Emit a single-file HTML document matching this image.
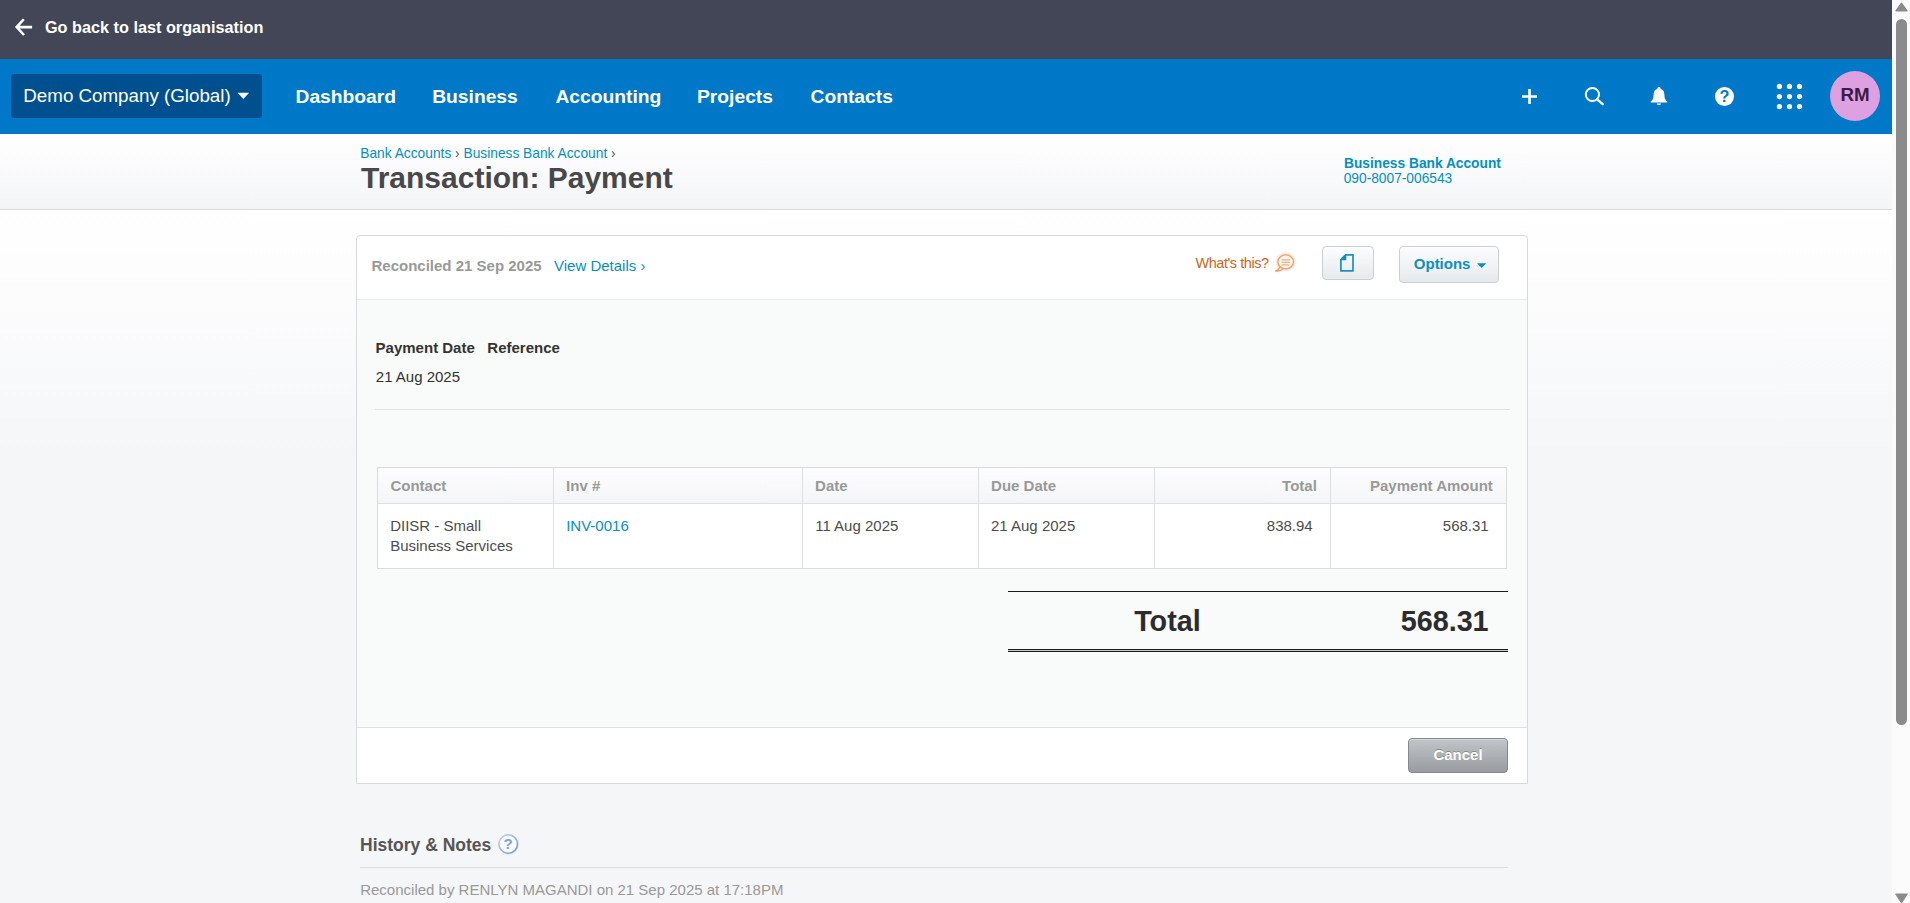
<!DOCTYPE html>
<html>
<head>
<meta charset="utf-8">
<title>Transaction: Payment</title>
<style>
*{box-sizing:border-box;margin:0;padding:0}
html,body{width:1910px;height:903px;overflow:hidden}
body{font-family:"Liberation Sans",sans-serif;font-size:15px;color:#333;background:#f5f6f8;position:relative}
.abs{position:absolute}
.t{position:absolute;white-space:nowrap;line-height:20px}
a{color:#048fc2;text-decoration:none}
/* page chrome */
#bgfade{left:0;top:210px;width:1892px;height:250px;background:linear-gradient(#fff,#f5f6f8)}
#topbar{left:0;top:0;width:1892px;height:59px;background:#424657}
#nav{left:0;top:59px;width:1892px;height:75px;background:#0078c8}
#hdr{left:0;top:134px;width:1892px;height:75px;background:linear-gradient(#fff,#f4f5f7)}
#hdrline{left:0;top:209px;width:1892px;height:1px;background:#d9dbde}
#org{left:11px;top:74px;width:251px;height:44px;border-radius:3px;background:#00508f}
.nv{font-weight:bold;font-size:19.25px;color:#fff}
/* scrollbar */
#sb{left:1892px;top:0;width:18px;height:903px;background:#fbfbfb}
#sbthumb{left:1896px;top:19px;width:11px;height:705.6px;border-radius:5.5px;background:#8b8b8b}
/* panel */
#panel{left:356px;top:235px;width:1172px;height:549px;border:1px solid #d9dadc;border-radius:4px 4px 0 0;background:#fff}
#pmid{left:357px;top:299px;width:1170px;height:429px;background:#f9fafa;border-top:1px solid #e8ebed;border-bottom:1px solid #dfe1e3}
.btn{border:1px solid #cbd0d4;border-radius:4px;background:linear-gradient(#fdfdfe,#e6e9ec)}
.th{font-weight:bold;color:#999}
.cell{color:#4c4c4e}
</style>
</head>
<body>
<div class="abs" id="bgfade"></div>
<div class="abs" id="topbar"></div>
<div class="abs" id="nav"></div>
<div class="abs" id="hdr"></div>
<div class="abs" id="hdrline"></div>

<!-- top dark bar -->
<svg class="abs" style="left:14px;top:18px" width="20" height="18" viewBox="0 0 20 18"><path d="M9.8 1.25 L2.65 9.1 L10 17 M3 9.1 H18.1" fill="none" stroke="#fff" stroke-width="2.55" stroke-linecap="butt" stroke-linejoin="miter"/></svg>
<div class="t" style="left:44.9px;top:17.4px;font-weight:bold;font-size:16.25px;color:#fff">Go back to last organisation</div>

<!-- nav -->
<div class="abs" id="org"></div>
<div class="t" style="left:23.3px;top:85.5px;font-size:18.75px;color:#fff">Demo Company (Global)</div>
<svg class="abs" style="left:237px;top:92px" width="13" height="8" viewBox="0 0 13 8"><path d="M0.7 0.8 H12.1 L6.4 7 Z" fill="#fff"/></svg>
<div class="t nv" style="left:295.5px;top:87.3px">Dashboard</div>
<div class="t nv" style="left:432.2px;top:87.3px">Business</div>
<div class="t nv" style="left:555.4px;top:87.3px">Accounting</div>
<div class="t nv" style="left:697px;top:87.3px">Projects</div>
<div class="t nv" style="left:810.5px;top:87.3px">Contacts</div>

<!-- nav icons -->
<svg class="abs" style="left:1520px;top:87px" width="20" height="20" viewBox="0 0 20 20"><path d="M9.5 2 V17 M2 9.5 H17" stroke="#fff" stroke-width="2.6" fill="none"/></svg>
<svg class="abs" style="left:1582px;top:84px" width="24" height="24" viewBox="0 0 24 24"><circle cx="10.4" cy="10.5" r="6.6" fill="none" stroke="#fff" stroke-width="2"/><path d="M15.2 15.3 L20.7 20.1" stroke="#fff" stroke-width="2.4" stroke-linecap="round"/></svg>
<svg class="abs" style="left:1649px;top:85px" width="20" height="22" viewBox="0 0 20 22"><path d="M10 2 C8.9 2 8.3 2.8 8.4 3.7 C5.6 4.6 4.6 7 4.6 10 C4.6 13.5 3.6 15 1.8 16.6 V17.6 H18.2 V16.6 C16.4 15 15.4 13.5 15.4 10 C15.4 7 14.4 4.6 11.6 3.7 C11.7 2.8 11.1 2 10 2 Z" fill="#fff"/><path d="M7.9 18.6 H12.1 C12.1 19.6 11.2 20.3 10 20.3 C8.8 20.3 7.9 19.6 7.9 18.6 Z" fill="#fff"/></svg>
<div class="abs" style="left:1715px;top:86.8px;width:18.8px;height:18.8px;border-radius:50%;background:#fff"></div>
<div class="t" style="left:1715px;top:86.1px;width:18.8px;text-align:center;font-weight:bold;font-size:16.25px;color:#0078c8">?</div>
<svg class="abs" style="left:1775px;top:82px" width="30" height="30" viewBox="0 0 30 30" fill="#fff"><circle cx="4.4" cy="4.4" r="2.6"/><circle cx="14.5" cy="4.4" r="2.6"/><circle cx="24.5" cy="4.4" r="2.6"/><circle cx="4.4" cy="14.6" r="2.6"/><circle cx="14.5" cy="14.6" r="2.6"/><circle cx="24.5" cy="14.6" r="2.6"/><circle cx="4.4" cy="24.6" r="2.6"/><circle cx="14.5" cy="24.6" r="2.6"/><circle cx="24.5" cy="24.6" r="2.6"/></svg>
<div class="abs" style="left:1830px;top:71px;width:50px;height:50px;border-radius:50%;background:#dda0e0"></div>
<div class="t" style="left:1830px;top:85.3px;width:50px;text-align:center;font-weight:bold;font-size:18.75px;color:#3f1946">RM</div>

<!-- page header -->
<div class="t" style="left:360.3px;top:144px;font-size:13.75px;color:#555"><a>Bank Accounts</a> › <a>Business Bank Account</a> ›</div>
<div class="t" style="left:361px;top:157.6px;font-weight:bold;font-size:30px;line-height:40px;color:#48484a">Transaction: Payment</div>
<div class="t" style="left:1344px;top:153.7px;font-weight:bold;font-size:13.75px;color:#048fc2">Business Bank Account</div>
<div class="t" style="left:1343.7px;top:168.9px;font-size:13.75px;color:#048fc2">090-8007-006543</div>

<!-- panel -->
<div class="abs" id="panel"></div>
<div class="abs" id="pmid"></div>
<div class="t" style="left:371.5px;top:255.7px;font-weight:bold;color:#999">Reconciled 21 Sep 2025</div>
<div class="t" style="left:554px;top:255.7px"><a>View Details ›</a></div>
<div class="t" style="left:1195.5px;top:252.9px;font-size:14.5px;letter-spacing:-0.45px;color:#d0641a">What's this?</div>
<svg class="abs" style="left:1273px;top:251px" width="24" height="23" viewBox="0 0 24 23"><defs><filter id="bg" x="-30%" y="-30%" width="160%" height="160%"><feGaussianBlur stdDeviation="0.9"/></filter></defs><g filter="url(#bg)" opacity=".55"><ellipse cx="12.7" cy="10.8" rx="7.9" ry="7.1" fill="none" stroke="#e89a5c" stroke-width="2.2"/><path d="M7 15.6 C6.4 17.6 5 19.2 2.6 20 C6 20.4 8.6 19.4 10.4 17.6 Z" fill="#e89a5c"/></g><path d="M7 15.4 C6.4 17.6 5 19.2 2.6 20 C6 20.4 8.6 19.4 10.6 17.4 Z" fill="#fbeadb" stroke="#e8a06a" stroke-width="1.3" stroke-linejoin="round"/><ellipse cx="12.7" cy="10.8" rx="7.75" ry="6.95" fill="#fdf5ec" stroke="#e9a572" stroke-width="1.35"/><path d="M8.6 8.8 H17.1 M8.6 11.3 H17.1 M8.6 13.8 H16" stroke="#ebb185" stroke-width="1.25"/></svg>
<div class="abs btn" style="left:1322px;top:246px;width:52px;height:34px"></div>
<svg class="abs" style="left:1338px;top:252px" width="18" height="22" viewBox="0 0 18 22"><path d="M7.6 2.9 H15 V18.8 H2.9 V7.6 Z" fill="none" stroke="#1b90c6" stroke-width="1.7" stroke-linejoin="miter"/><path d="M8.3 2.2 V8.2 H2.3 Z" fill="#0f8cc4"/></svg>
<div class="abs btn" style="left:1399px;top:246px;width:100px;height:37px"></div>
<div class="t" style="left:1413.8px;top:254px;font-weight:bold;color:#0d8fc5">Options</div>
<svg class="abs" style="left:1476px;top:262px" width="12" height="7" viewBox="0 0 12 7"><path d="M1 1.2 H10.4 L5.7 6 Z" fill="#0d8fc5"/></svg>

<div class="t" style="left:375.6px;top:337.7px;font-weight:bold;color:#333">Payment Date</div>
<div class="t" style="left:487.3px;top:337.7px;font-weight:bold;color:#333">Reference</div>
<div class="t" style="left:375.8px;top:367.4px;color:#333">21 Aug 2025</div>
<div class="abs" style="left:375px;top:409px;width:1135px;height:1px;background:#dfe0e0"></div>
<div class="abs" style="left:375px;top:410px;width:1135px;height:1px;background:#fdfefe"></div>

<!-- table -->
<div class="abs" style="left:377px;top:467px;width:1130px;height:102px;background:#fff;border:1px solid #d9dbdd"></div>
<div class="abs" style="left:378px;top:468px;width:1128px;height:35px;background:linear-gradient(#fdfdfe,#f4f5f7)"></div>
<div class="abs" style="left:378px;top:503px;width:1128px;height:1px;background:#dddfe1"></div>
<div class="abs" style="left:553px;top:468px;width:1px;height:100px;background:#dddfe1"></div>
<div class="abs" style="left:802px;top:468px;width:1px;height:100px;background:#dddfe1"></div>
<div class="abs" style="left:978px;top:468px;width:1px;height:100px;background:#dddfe1"></div>
<div class="abs" style="left:1154px;top:468px;width:1px;height:100px;background:#dddfe1"></div>
<div class="abs" style="left:1330px;top:468px;width:1px;height:100px;background:#dddfe1"></div>
<div class="t th" style="left:390.4px;top:476.2px">Contact</div>
<div class="t th" style="left:566.1px;top:476.2px">Inv #</div>
<div class="t th" style="left:815.1px;top:476.2px">Date</div>
<div class="t th" style="left:991.1px;top:476.2px">Due Date</div>
<div class="t th" style="right:593.2px;top:476.2px">Total</div>
<div class="t th" style="right:417.2px;top:476.2px">Payment Amount</div>
<div class="t cell" style="left:390.2px;top:515.5px">DIISR - Small<br>Business Services</div>
<div class="t cell" style="left:566.2px;top:515.5px"><a>INV-0016</a></div>
<div class="t cell" style="left:815.2px;top:515.5px">11 Aug 2025</div>
<div class="t cell" style="left:991px;top:515.5px">21 Aug 2025</div>
<div class="t cell" style="right:597.3px;top:515.5px">838.94</div>
<div class="t cell" style="right:421.3px;top:515.5px">568.31</div>

<!-- total -->
<div class="abs" style="left:1008px;top:591px;width:500px;height:1px;background:#1a1a1a"></div>
<div class="abs" style="left:1008px;top:649px;width:500px;height:1px;background:#1a1a1a"></div>
<div class="abs" style="left:1008px;top:650px;width:500px;height:1px;background:#c9caca"></div>
<div class="abs" style="left:1008px;top:651px;width:500px;height:1px;background:#1a1a1a"></div>
<div class="t" style="left:1134.2px;top:600.6px;font-weight:bold;font-size:28.75px;line-height:40px;color:#2c2c2e">Total</div>
<div class="t" style="right:421.4px;top:600.6px;font-weight:bold;font-size:28.75px;line-height:40px;color:#2c2c2e">568.31</div>

<!-- cancel -->
<div class="abs" style="left:1408px;top:738px;width:100px;height:35px;border:1px solid #84898e;border-radius:4px;background:linear-gradient(#c1c4c8,#989ca0);box-shadow:inset 0 1px 0 rgba(255,255,255,.35)"></div>
<div class="t" style="left:1408px;top:745px;width:100px;text-align:center;font-weight:bold;color:#fff;text-shadow:0 -1px 0 rgba(0,0,0,.25)">Cancel</div>

<!-- history -->
<div class="t" style="left:360px;top:835.2px;font-weight:bold;font-size:17.5px;color:#555">History &amp; Notes</div>
<svg class="abs" style="left:496px;top:832px" width="25" height="25" viewBox="0 0 25 25"><defs><linearGradient id="hg" x1="0" y1="0" x2="1" y2="1"><stop offset="0" stop-color="#c6d5ec"/><stop offset="1" stop-color="#6a93d3"/></linearGradient></defs><circle cx="12.6" cy="12.4" r="9.6" fill="none" stroke="#8fb0e0" stroke-width="1.2" opacity=".35"/><circle cx="12.2" cy="12" r="9.3" fill="#f9fafc" stroke="url(#hg)" stroke-width="1.5"/></svg>
<div class="t" style="left:498.2px;top:834.1px;width:20px;text-align:center;font-weight:bold;font-size:15px;color:#7fa2d8">?</div>
<div class="abs" style="left:360px;top:867px;width:1148px;height:1px;background:#dcdee1"></div>
<div class="t" style="left:360.2px;top:880.4px;color:#999">Reconciled by RENLYN MAGANDI on 21 Sep 2025 at 17:18PM</div>

<!-- scrollbar -->
<div class="abs" id="sb"></div>
<div class="abs" id="sbthumb"></div>
<svg class="abs" style="left:1894px;top:1px" width="15" height="12" viewBox="0 0 15 12"><path d="M7.5 2.2 L13 9.8 H2 Z" fill="#8b8b8b" stroke="#8b8b8b" stroke-width="1.4" stroke-linejoin="round"/></svg>
<svg class="abs" style="left:1894px;top:891.6px" width="15" height="13" viewBox="0 0 15 13"><path d="M7.5 10.6 L13 2.2 H2 Z" fill="#8b8b8b" stroke="#8b8b8b" stroke-width="1.4" stroke-linejoin="round"/></svg>
</body>
</html>
